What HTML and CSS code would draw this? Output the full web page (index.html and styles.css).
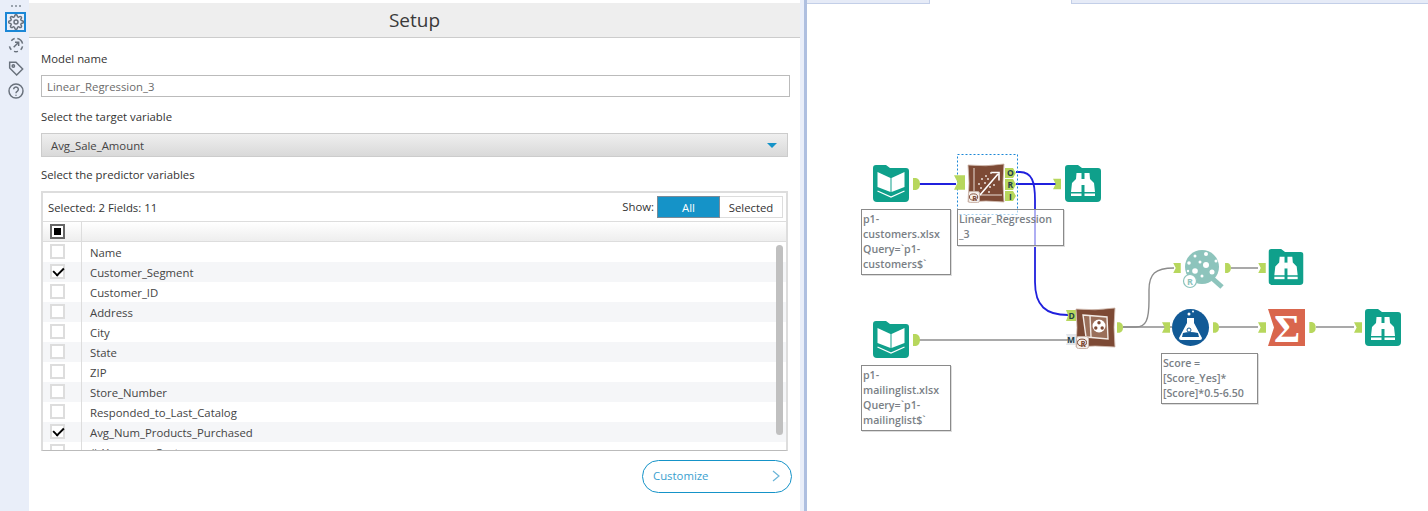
FILE: index.html
```html
<!DOCTYPE html>
<html lang="en">
<head>
<meta charset="utf-8">
<title>Setup</title>
<link rel="stylesheet" href="styles.css">
</head>
<body>
<div class="app">
  <nav class="rail">
    <div class="rail-dots"><i></i><i></i><i></i></div>
    <div class="rail-btn is-active">
      <svg class="rail-icon" viewBox="0 0 24 24"><circle cx="12" cy="12" r="3"/><path d="M19.4 15a1.65 1.65 0 0 0 .33 1.82l.06.06a2 2 0 0 1 0 2.83 2 2 0 0 1-2.83 0l-.06-.06a1.65 1.65 0 0 0-1.82-.33 1.65 1.65 0 0 0-1 1.51V21a2 2 0 0 1-2 2 2 2 0 0 1-2-2v-.09A1.65 1.65 0 0 0 9 19.4a1.65 1.65 0 0 0-1.82.33l-.06.06a2 2 0 0 1-2.83 0 2 2 0 0 1 0-2.83l.06-.06a1.65 1.65 0 0 0 .33-1.82 1.65 1.65 0 0 0-1.51-1H3a2 2 0 0 1-2-2 2 2 0 0 1 2-2h.09A1.65 1.65 0 0 0 4.6 9a1.65 1.65 0 0 0-.33-1.82l-.06-.06a2 2 0 0 1 0-2.83 2 2 0 0 1 2.83 0l.06.06a1.65 1.65 0 0 0 1.82.33H9a1.65 1.65 0 0 0 1-1.51V3a2 2 0 0 1 2-2 2 2 0 0 1 2 2v.09a1.65 1.65 0 0 0 1 1.51 1.65 1.65 0 0 0 1.82-.33l.06-.06a2 2 0 0 1 2.83 0 2 2 0 0 1 0 2.83l-.06.06a1.65 1.65 0 0 0-.33 1.82V9a1.65 1.65 0 0 0 1.51 1H21a2 2 0 0 1 2 2 2 2 0 0 1-2 2h-.09a1.65 1.65 0 0 0-1.51 1z"/></svg>
    </div>
    <div class="rail-btn">
      <svg class="rail-icon" viewBox="0 0 24 24"><path d="M5 5.5A10 10 0 0 1 10 2.2M14 2.2A10 10 0 0 1 21.8 10M21.8 14A10 10 0 0 1 19 19M15 21.5A10 10 0 0 1 9 21.5M5 19A10 10 0 0 1 2.2 14"/><path d="M8.5 15.5L16 8M10.5 8H16V13.5"/></svg>
    </div>
    <div class="rail-btn">
      <svg class="rail-icon" viewBox="0 0 24 24"><path d="M2.5 3.500H12L22 13.500L13 22.500L2.500 12Z"/><circle cx="8" cy="9" r="1.800"/></svg>
    </div>
    <div class="rail-btn">
      <svg class="rail-icon" viewBox="0 0 24 24"><circle cx="12" cy="12" r="10.500"/><path d="M8.500 9.500A3.500 3.500 0 1 1 13.800 12.500C12.600 13.200 12 14 12 15.200"/><path d="M12 17.500V19"/></svg>
    </div>
  </nav>

  <main class="panel">
    <header class="panel-head">Setup</header>
    <div class="panel-body">
      <div class="label label-first">Model name</div>
      <div class="text-input">Linear_Regression_3</div>
      <div class="label">Select the target variable</div>
      <div class="dropdown"><span>Avg_Sale_Amount</span><i class="caret"></i></div>
      <div class="label label-tight">Select the predictor variables</div>

      <section class="grid-box">
        <div class="grid-top">
          <span>Selected: 2 Fields: 11</span>
          <div class="show">
            <span class="show-label">Show:</span>
            <span class="toggle toggle-on">All</span>
            <span class="toggle">Selected</span>
          </div>
        </div>
        <div class="grid-head">
          <div class="cell-check"><i class="check check-mixed"></i></div>
          <div class="cell-name"></div>
        </div>
        <div class="grid-rows">
          <div class="row"><div class="cell-check"><i class="check"></i></div><div class="cell-name">Name</div></div>
          <div class="row row-alt"><div class="cell-check"><i class="check check-on"></i></div><div class="cell-name">Customer_Segment</div></div>
          <div class="row"><div class="cell-check"><i class="check"></i></div><div class="cell-name">Customer_ID</div></div>
          <div class="row row-alt"><div class="cell-check"><i class="check"></i></div><div class="cell-name">Address</div></div>
          <div class="row"><div class="cell-check"><i class="check"></i></div><div class="cell-name">City</div></div>
          <div class="row row-alt"><div class="cell-check"><i class="check"></i></div><div class="cell-name">State</div></div>
          <div class="row"><div class="cell-check"><i class="check"></i></div><div class="cell-name">ZIP</div></div>
          <div class="row row-alt"><div class="cell-check"><i class="check"></i></div><div class="cell-name">Store_Number</div></div>
          <div class="row"><div class="cell-check"><i class="check"></i></div><div class="cell-name">Responded_to_Last_Catalog</div></div>
          <div class="row row-alt"><div class="cell-check"><i class="check check-on"></i></div><div class="cell-name">Avg_Num_Products_Purchased</div></div>
          <div class="row"><div class="cell-check"><i class="check"></i></div><div class="cell-name">#_Years_on_Customer</div></div>
          <div class="scrollbar"></div>
        </div>
      </section>

      <div class="actions">
        <div class="customize"><span>Customize</span>
          <svg class="chev" viewBox="0 0 8 12"><path d="M1 1L7 6L1 11"/></svg>
        </div>
      </div>
    </div>
  </main>

  <div class="splitter"></div>

  <section class="canvas">
    <div class="tabs">
      <div class="tab tab-a"></div>
      <div class="tab tab-active"></div>
      <div class="tab tab-b"></div>
    </div>

    <svg class="flow" viewBox="807 0 621 511" xmlns="http://www.w3.org/2000/svg">
      <defs>
        <symbol id="in" viewBox="0 0 9 12"><path d="M0 0H9V12H0L3 6Z" fill="#b7d75d"/></symbol>
        <symbol id="out" viewBox="0 0 7 12"><path d="M0 0H3Q7 1 7 6T3 12H0Z" fill="#b7d75d"/></symbol>
        <symbol id="folder" viewBox="0 0 36 37"><path d="M3 0H13L17 3H33Q36 3 36 6V33Q36 37 32 37H4Q0 37 0 33V3Q0 0 3 0Z" fill="#0fa08b"/></symbol>
        <symbol id="book" viewBox="0 0 36 37">
          <use href="#folder" width="36" height="37"/>
          <path d="M4.500 7L17.500 13V27L4.500 22Z M31.500 7L18.500 13V27L31.500 22Z" fill="#fff"/>
          <path d="M4.500 26L18 32L31.500 26" fill="none" stroke="#fff" stroke-width="1.300"/>
        </symbol>
        <symbol id="binoc" viewBox="0 0 36 37">
          <use href="#folder" width="36" height="37"/>
          <path d="M11.500 8H16.500V27H6L7 18L11 14Z M24.500 8H19.500V27H30L29 18L25 14Z" fill="#fff"/>
          <rect x="16" y="14" width="4" height="6" fill="#fff"/>
          <rect x="6" y="28.500" width="10.500" height="2.500" fill="#fff"/>
          <rect x="19.500" y="28.500" width="10.500" height="2.500" fill="#fff"/>
        </symbol>
        <symbol id="rbadge" viewBox="0 0 13 13">
          <rect x=".5" y=".5" width="12" height="12" rx="2" fill="#f4eeea" stroke="#c9b3a8"/>
          <ellipse cx="6" cy="6.500" rx="4.500" ry="3.400" fill="none" stroke="#7d4a35"/>
          <text x="4.600" y="10.500" class="badge-r">R</text>
        </symbol>
      </defs>

      <g class="wire wire-gray">
        <path d="M919 340H1068"/>
        <path d="M1123 327H1172"/>
        <path d="M1231 268H1258"/>
        <path d="M1219 327H1258"/>
        <path d="M1316 327H1354"/>
      </g>
      <path class="wire-curve" d="M1123 327H1136C1146 327 1149 320 1149 300V290C1149 274 1155 268 1174 268"/>
      <g class="wire wire-blue">
        <path d="M919 184H956"/>
        <path d="M1016 184H1057"/>
        <path d="M1016 172H1020C1032 172 1035 182 1035 200V282C1035 306 1046 315 1068 315"/>
      </g>

      <use href="#book" x="873" y="165" width="36" height="37"/>
      <use href="#out" x="913" y="178" width="7" height="12"/>

      <rect class="select-box" x="957.500" y="154.500" width="60" height="60"/>
      <use href="#in" x="954" y="175" width="11" height="15"/>
      <path class="pillow" d="M968 165Q986 167 1004 164Q1002 183 1004 202Q986 200 968 202Q970 183 968 165Z"/>
      <path d="M974 168V195H1002" fill="none" stroke="#e9dcd5" stroke-width="1"/>
      <path d="M980 195L998 174M991 172.500H999V180.500" fill="none" stroke="#fff" stroke-width="1.600"/>
      <g fill="#eadfd9">
        <circle cx="982" cy="179" r="1"/><circle cx="986" cy="176" r="1"/><circle cx="979" cy="184" r="1"/><circle cx="985" cy="183" r="1"/><circle cx="990" cy="187" r="1"/><circle cx="994" cy="185" r="1"/><circle cx="989" cy="192" r="1"/><circle cx="991" cy="173" r="1"/><circle cx="981" cy="188" r="1"/><circle cx="988" cy="179" r="1"/>
      </g>
      <use href="#rbadge" x="968" y="191" width="12" height="12"/>
      <path class="port" d="M1005 168H1013L1016 173L1013 178H1005Z"/>
      <path class="port" d="M1005 179H1013L1016 184.500L1013 190H1005Z"/>
      <path class="port" d="M1005 191H1013L1016 196L1013 201H1005Z"/>
      <text class="port-t" x="1007" y="176">O</text>
      <text class="port-t" x="1007.500" y="188">R</text>
      <text class="port-t" x="1009" y="199.500">I</text>

      <use href="#in" x="1053" y="178" width="8" height="12"/>
      <use href="#binoc" x="1065" y="165" width="36" height="37"/>

      <use href="#book" x="873" y="321" width="36" height="37"/>
      <use href="#out" x="913" y="334" width="7" height="12"/>

      <path class="port" d="M1066 310H1076V321H1066L1068 315.500Z"/>
      <text class="port-t" x="1068.500" y="319">D</text>
      <path d="M1066 334H1077V345H1066L1068 339.500Z" fill="#e3e6ea"/>
      <text class="port-t" x="1067" y="343">M</text>
      <path class="pillow" d="M1076 309Q1095 311 1115 308Q1113 327 1115 347Q1095 345 1076 347Q1078 327 1076 309Z"/>
      <path d="M1083 315L1107 317L1108 339L1086 337Z" fill="#9a6f5a" stroke="#f3ebe6" stroke-width="1.400"/>
      <path d="M1090 316L1091 337" stroke="#f3ebe6" stroke-width="1.400"/>
      <circle cx="1099" cy="326" r="6.500" fill="#fff"/>
      <g fill="#7d4a35"><circle cx="1099" cy="322.800" r="1.700"/><circle cx="1095.800" cy="328" r="1.700"/><circle cx="1102.200" cy="328" r="1.700"/></g>
      <use href="#rbadge" x="1076" y="336" width="13" height="13"/>
      <use href="#out" x="1117" y="322" width="6" height="11"/>

      <use href="#in" x="1173" y="263" width="8" height="10"/>
      <circle cx="1202" cy="267" r="17" fill="#8dc4bc"/>
      <path d="M1213 279L1222 287" stroke="#8dc4bc" stroke-width="5"/>
      <g fill="#fff">
        <circle cx="1206" cy="254" r="2"/><circle cx="1195" cy="256" r="1.500"/><circle cx="1200" cy="262" r="1.500"/><circle cx="1189" cy="263" r="1.800"/><circle cx="1206" cy="265" r="3"/><circle cx="1216" cy="261" r="1.500"/><circle cx="1195" cy="271" r="2.800"/><circle cx="1212" cy="272" r="2.500"/><circle cx="1202" cy="276" r="1.500"/><circle cx="1188" cy="271" r="1.200"/>
      </g>
      <circle cx="1190" cy="281" r="6.500" fill="#fff" stroke="#8dc4bc" stroke-width="1.200"/>
      <text class="badge-r badge-teal" x="1187" y="285">R</text>
      <use href="#out" x="1225" y="263" width="6" height="10"/>
      <use href="#in" x="1258" y="263" width="8" height="10"/>
      <use href="#binoc" x="1268" y="249" width="36" height="36"/>

      <use href="#in" x="1162" y="322" width="8" height="11"/>
      <circle cx="1190.500" cy="327.500" r="18.500" fill="#125a96"/>
      <path d="M1187 318H1194V323L1202 338Q1202 340 1200 340H1181Q1179 340 1179 338L1187 323Z" fill="#fff"/>
      <path d="M1183 333Q1190 331 1198 333L1199 337H1182Z" fill="#125a96"/>
      <circle cx="1189" cy="330" r="2" fill="none" stroke="#125a96"/>
      <circle cx="1189" cy="314" r="1.500" fill="#fff"/><circle cx="1193" cy="311.500" r="1" fill="#fff"/>
      <use href="#out" x="1213" y="322" width="6" height="11"/>
      <use href="#in" x="1258" y="322" width="8" height="11"/>
      <path d="M1268 309H1305V346H1268L1274 327.500Z" fill="#d9664d"/>
      <text class="sigma" x="1274" y="342">Σ</text>
      <use href="#out" x="1309" y="322" width="7" height="11"/>
      <use href="#in" x="1354" y="322" width="8" height="11"/>
      <use href="#binoc" x="1365" y="309" width="36" height="37"/>
    </svg>

    <div class="note note-input1">p1-<br>customers.xlsx<br>Query=`p1-<br>customers$`</div>
    <div class="note note-model">Linear_Regression<br>_3</div>
    <div class="note note-input2">p1-<br>mailinglist.xlsx<br>Query=`p1-<br>mailinglist$`</div>
    <div class="note note-score">Score =<br>[Score_Yes]*<br>[Score]*0.5-6.50</div>
  </section>
</div>
</body>
</html>
```

FILE: styles.css
```css
* { box-sizing: border-box; }
html, body { margin: 0; height: 100%; overflow: hidden; background: #fff; }
body { font: 11.35px/16px "Open Sans", "Noto Sans", sans-serif; color: #333; }
.app { display: flex; height: 511px; width: 1428px; }

/* left icon rail */
.rail { width: 29px; flex: none; background: #e9eef9; display: flex; flex-direction: column; align-items: center; padding: 5px 0 0 2px; }
.rail-dots { display: flex; gap: 2px; height: 7px; }
.rail-dots i { width: 2px; height: 2px; background: #9aa3ad; }
.rail-btn { width: 21px; height: 20px; display: flex; align-items: center; justify-content: center; margin-bottom: 3px; border: 2px solid transparent; }
.rail-btn.is-active { border-color: #1b87d6; }
.rail-icon { width: 16px; height: 16px; flex: none; fill: none; stroke: #69717c; stroke-width: 2.2; }

/* setup panel */
.panel { width: 771px; flex: none; margin-top: 3px; display: flex; flex-direction: column; background: #fff; }
.panel-head { height: 35px; flex: none; background: #eee; border-bottom: 1px solid #ccc; font-size: 19px; line-height: 35px; text-align: center; color: #3a3a3a; }
.panel-body { padding: 13px 8px 0 12px; display: flex; flex-direction: column; }
.label { height: 16px; margin-top: 12px; color: #333; }
.label-first { margin-top: 0; }
.label-tight { margin-top: 10px; }
.text-input { height: 22px; margin: 8px 2px 0 0; border: 1px solid #bbb; padding: 0 5px; line-height: 22px; color: #6c6c6c; }
.dropdown { height: 24px; margin: 8px 4px 0 0; border: 1px solid #ccc; background: linear-gradient(#efefef, #d9d9d9); padding: 0 10px 0 9px; line-height: 23px; display: flex; justify-content: space-between; align-items: center; color: #444; }
.caret { width: 0; height: 0; border: 5px solid transparent; border-top: 5px solid #1593c8; border-bottom: 0; }

/* field grid */
.grid-box { height: 260px; margin: 8px 4px 0 0; border: 2px solid #ddd; border-bottom: 1px solid #bbb; display: flex; flex-direction: column; overflow: hidden; }
.grid-top { height: 29px; flex: none; display: flex; justify-content: space-between; align-items: center; padding: 1px 3px 0 5px; border-bottom: 1px solid #ddd; }
.show { display: flex; align-items: center; margin-top: -1px; }
.show-label { margin-right: 3px; }
.toggle { width: 63px; height: 22px; border: 1px solid #ddd; border-left: 0; text-align: center; line-height: 21px; }
.toggle-on { border: 1px solid #7b8b98; background: #1593c8; color: #fff; }
.grid-head { height: 20px; flex: none; display: flex; background: linear-gradient(#fff, #eee); border-bottom: 1px solid #ddd; }
.cell-check { width: 39px; flex: none; border-right: 1px solid #ddd; display: flex; align-items: center; padding-left: 7px; }
.row .cell-check { padding-bottom: 2px; }
.cell-name { flex: 1; padding-left: 8px; color: #444; white-space: nowrap; }
.grid-rows { flex: 1; position: relative; overflow: hidden; }
.row { height: 20px; display: flex; line-height: 21px; }
.row-alt { background: #f5f6f8; }
.check { width: 15px; height: 15px; border: 2px solid #ddd; background: #fff; position: relative; display: block; }
.check-mixed { border-color: #666; }
.check-mixed::after { content: ""; position: absolute; left: 2px; top: 2px; width: 7px; height: 7px; background: #000; }
.check-on::after { content: ""; position: absolute; left: 1px; top: 1px; width: 9px; height: 5px; border-left: 2px solid #000; border-bottom: 2px solid #000; transform: rotate(-45deg) scale(.95); }
.scrollbar { position: absolute; left: 733px; top: 3px; width: 7px; height: 190px; background: #c0c0c0; border-radius: 4px; }

.actions { display: flex; justify-content: flex-end; margin-top: 9px; }
.customize { width: 150px; height: 33px; border: 1px solid #1593c8; border-radius: 17px; padding: 0 11px 2px 10px; display: flex; align-items: center; justify-content: space-between; color: #3a9fcf; }
.chev { width: 8px; height: 12px; fill: none; stroke: #6bb5d8; stroke-width: 1.2; }

/* splitter */
.splitter { width: 7px; flex: none; background: linear-gradient(90deg, #e9eef9 0 4px, #aebfe0 4px); }

/* workflow canvas */
.canvas { flex: 1; position: relative; background: #fff; overflow: hidden; }
.tabs { display: flex; height: 4px; }
.tab { background: #e6ebf7; border-bottom: 1px solid #c3cfe8; }
.tab-a { width: 123px; border-right: 1px solid #c3cfe8; }
.tab-active { width: 141px; background: #fff; border-bottom: 0; }
.tab-b { flex: 1; border-left: 1px solid #c3cfe8; }
.flow { position: absolute; left: 0; top: 0; width: 621px; height: 511px; }
.wire path { fill: none; }
.wire-gray path { stroke: #a9a9a9; stroke-width: 2; }
.wire-curve { fill: none; stroke: #8c8c8c; stroke-width: 1.4; }
.wire-blue path { stroke: #2020dd; stroke-width: 1.8; }
.select-box { fill: none; stroke: #1b87d6; stroke-dasharray: 2 2; }
.pillow { fill: #7d4a35; stroke: #cdb5a8; stroke-width: .8; }
.port { fill: #b7d75d; }
.port-t { font: 700 8.5px "Open Sans", sans-serif; fill: #23404a; }
.badge-r { font: 700 8px "Open Sans", sans-serif; fill: #7d4a35; }
.badge-teal { fill: #8dc4bc; font-size: 9px; }
.sigma { font: 700 40px "Liberation Serif", serif; fill: #fff; }

.note { position: absolute; background: #fff; border: 1px solid #8a8a8a; box-shadow: 1px 1px 0 #ddd; padding: 2px 1px; font-size: 10.65px; font-weight: 600; line-height: 15px; color: #7a7f86; white-space: nowrap; overflow: hidden; }
.note-input1 { left: 54px; top: 209px; width: 90px; height: 66px; }
.note-model { left: 150px; top: 209px; width: 107px; height: 37px; background: rgba(255, 255, 255, .6); }
.note-input2 { left: 54px; top: 365px; width: 90px; height: 66px; }
.note-score { left: 354px; top: 353px; width: 97px; height: 51px; }
```
